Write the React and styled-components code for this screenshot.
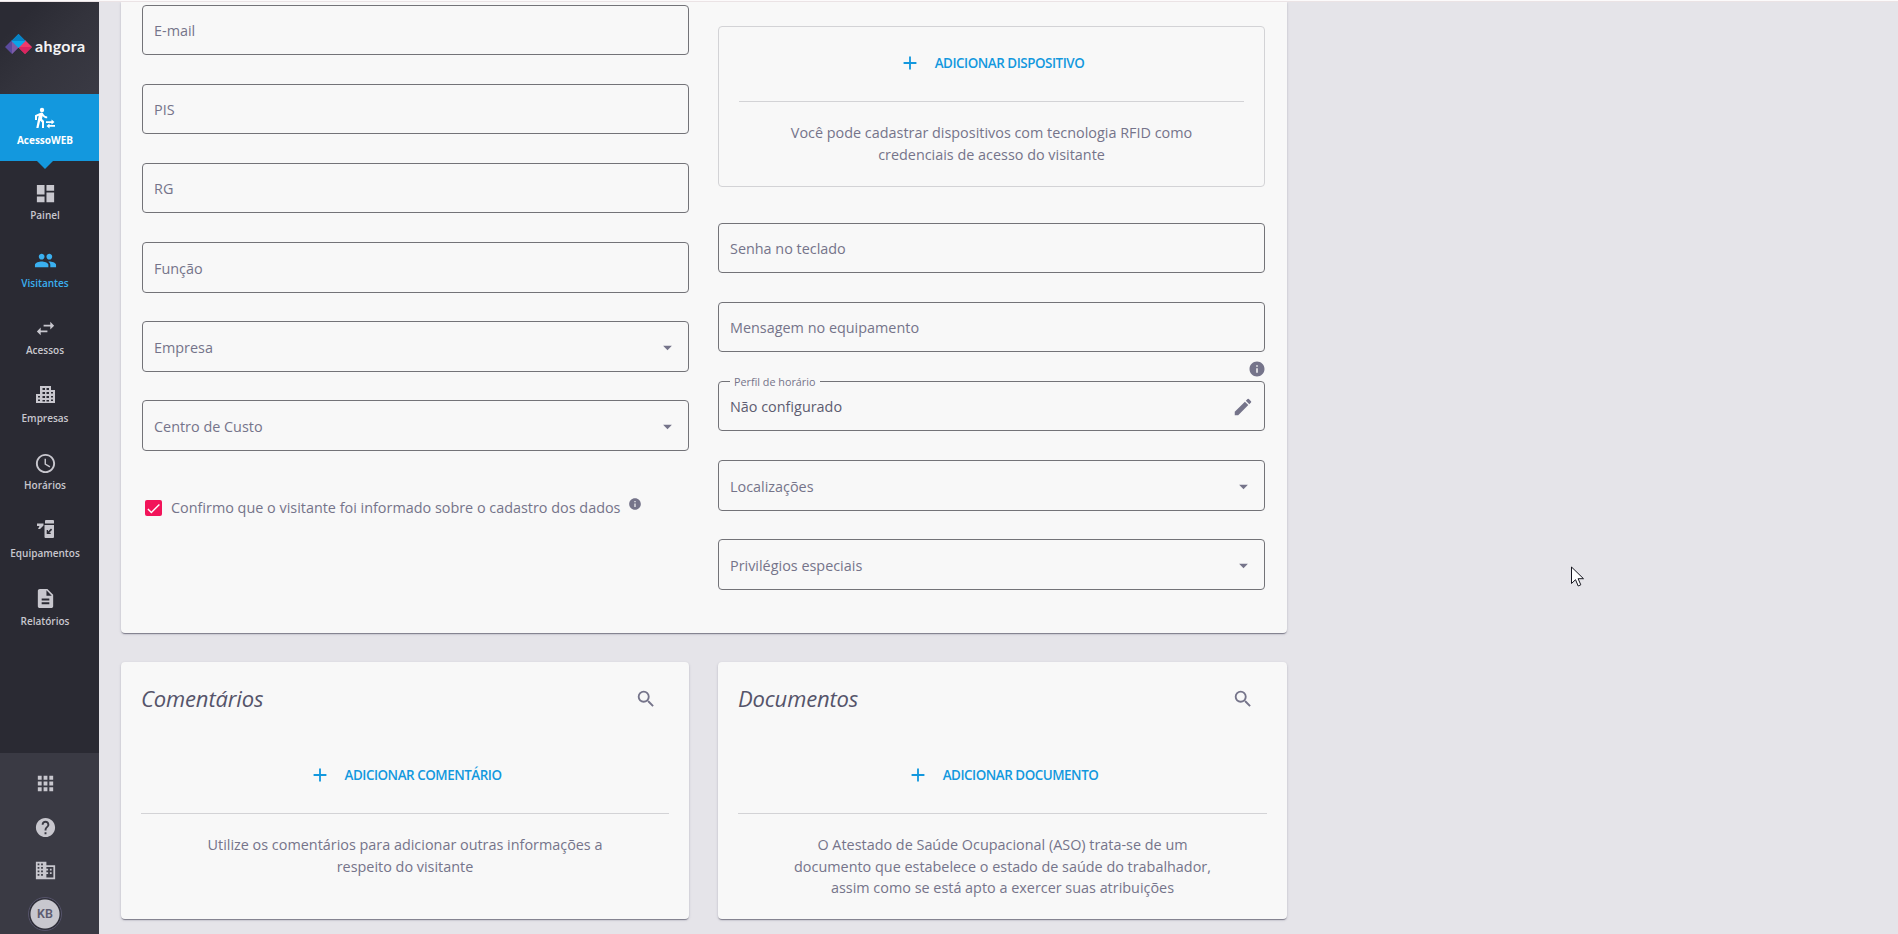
import * as React from 'react';
import styled, { createGlobalStyle, css } from 'styled-components';
import {
	MdDashboard,
	MdPeople,
	MdSwapHoriz,
	MdAccessTime,
	MdDescription,
	MdApps,
	MdHelp,
	MdSearch,
	MdAdd,
	MdEdit,
	MdInfo,
	MdArrowDropDown,
	MdCheck,
} from 'react-icons/md';

const GlobalStyle = createGlobalStyle`
	* {
		box-sizing: border-box;
	}

	body {
		margin: 0;
		height: 934px;
		overflow: hidden;
		background: #e5e4e9;
		font-family: 'Open Sans', 'Noto Sans', sans-serif;
		color: #75748a;
	}
`;

const TopStrip = styled.div`
	height: 2px;
	background: #fcfafb;
	border-bottom: 1px solid #ebe3e5;
`;

const Page = styled.div`
	display: flex;
	height: 932px;
	overflow: hidden;
`;

const Sidebar = styled.aside`
	display: flex;
	flex-direction: column;
	width: 99px;
	background: #2a2a33;
`;

const Brand = styled.div`
	display: flex;
	align-items: flex-start;
	height: 92px;
	padding: 32px 0 0 5px;
	background: linear-gradient(135deg, #2b2b34 20%, #33333c 52%, #3a3a44 100%);
`;

const BrandName = styled.span`
	margin-left: 2px;
	color: #f4f4f6;
	font: 700 16px/23px Lato, sans-serif;
	letter-spacing: 0.3px;
`;

const Nav = styled.nav`
	flex: 1;
	padding-right: 9px;
`;

const NavItem = styled.a`
	display: flex;
	flex-direction: column;
	align-items: center;
	height: 67.6px;
	padding-top: 17.5px;
	color: ${(props) => (props.$current ? '#3ab0f0' : '#c8c7ce')};
	font-size: 10px;
	font-weight: 600;
	line-height: 14px;

	svg {
		display: block;
		flex: none;
		margin-bottom: ${(props) => (props.$small ? '5.5px' : '3.5px')};
	}

	${(props) => props.$module && css`
		position: relative;
		height: 67px;
		margin-right: -9px;
		margin-bottom: 3px;
		padding: 13px 9px 0 0;
		background: #1398de;
		color: #fff;
		font-weight: 700;

		svg {
			margin-bottom: 4px;
		}

		&::after {
			content: '';
			position: absolute;
			top: 100%;
			left: 37px;
			border: 8.5px solid transparent;
			border-top-color: #1398de;
			border-bottom: 0;
		}
	`}
`;

const SidebarFooter = styled.div`
	height: 181px;
	padding: 9px 9px 0 0;
	background: #3a3a44;
	color: #c8c7ce;
`;

const FooterItem = styled.a`
	display: flex;
	align-items: center;
	justify-content: center;
	height: 43.4px;
`;

const Avatar = styled.div`
	display: flex;
	align-items: center;
	justify-content: center;
	width: 34px;
	height: 34px;
	border: 1px solid #55536a;
	border-radius: 50%;
	background: radial-gradient(circle, #c8c7ce 14px, #2f2f39 15px);
	color: #5d5c70;
	font: 600 12.5px Roboto, sans-serif;
`;

const Content = styled.main`
	width: 1166px;
	margin-left: 22px;
`;

const Card = styled.section`
	border-radius: 4px;
	background: #f8f8f8;
	box-shadow: 0 2px 1px -1px rgba(40, 38, 60, 0.35), 0 1px 1px rgba(40, 38, 60, 0.2), 0 1px 3px rgba(40, 38, 60, 0.16);
`;

const FormCard = styled(Card)`
	display: grid;
	grid-template-columns: 547px 547px;
	grid-gap: 29px;
	height: 631px;
	padding: 3px 0 0 21px;
	border-radius: 0 0 4px 4px;
`;

const FieldBox = styled.div`
	position: relative;
	display: flex;
	align-items: center;
	justify-content: space-between;
	height: ${(props) => (props.$tall ? '51px' : '50px')};
	margin-bottom: ${(props) => (props.$tall ? '28px' : '29px')};
	padding: 1px 10px 0 11px;
	border: 1px solid #737378;
	border-radius: 4px;
	color: ${(props) => (props.$filled ? '#5d5c70' : '#75748a')};
	font-size: 14.4px;

	svg {
		color: #75748a;
	}
`;

const FloatingLabel = styled.span`
	position: absolute;
	top: -8px;
	left: 11px;
	padding: 0 4px;
	background: #f8f8f8;
	color: #75748a;
	font-size: 10.8px;
	line-height: 15px;
`;

const FieldHint = styled.span`
	position: absolute;
	top: -22px;
	right: -2px;
	display: flex;
`;

const Consent = styled.label`
	display: flex;
	align-items: center;
	padding: 17px 0 0 3px;
	font-size: 14.4px;
	line-height: 24px;

	> svg {
		margin: -8px 0 0 8px;
	}
`;

const Checkbox = styled.span`
	display: flex;
	width: 17px;
	height: 16px;
	margin-right: 9px;
	border-radius: 2px;
	background: #f2145a;
	color: #fff;
`;

const DeviceBox = styled.div`
	height: 161px;
	margin: 21px 0 36px;
	padding: 18px 20px 0;
	border: 1px solid #d3d3d6;
	border-radius: 4px;
`;

const AddButton = styled.button`
	display: flex;
	align-items: center;
	justify-content: center;
	width: 100%;
	height: 36px;
	padding: 0 0 1px;
	border: 0;
	background: none;
	color: #1398de;
	font: 600 13.4px 'Open Sans', sans-serif;
	letter-spacing: -0.46px;

	svg {
		margin-right: 14px;
	}
`;

const Help = styled.p`
	margin: 20px 0 0;
	padding-top: 20px;
	border-top: 1px solid #d3d3d6;
	font-size: 14.4px;
	line-height: 21.6px;
	text-align: center;
`;

const Line = styled.span`
	display: block;
	white-space: nowrap;
`;

const Panels = styled.div`
	display: grid;
	grid-template-columns: 568px 569px;
	grid-gap: 29px;
	margin-top: 29px;
`;

const Panel = styled(Card)`
	height: 257px;
	padding: 19px 20px 0;
`;

const PanelHeader = styled.header`
	display: flex;
	align-items: center;
	justify-content: space-between;
	height: 36px;
	margin-bottom: 40px;
	padding-right: ${(props) => props.$inset}px;
`;

const PanelTitle = styled.h2`
	margin: 0;
	padding-bottom: 2px;
	color: #55546a;
	font: italic 400 22px 'Open Sans', sans-serif;
	letter-spacing: -0.15px;
`;

const Cursor = styled.svg`
	position: absolute;
	left: 1571px;
	top: 566px;
`;

const Logo = () => (
	<svg width="28" height="22" viewBox="0 0 28 22">
		<path d="M7 6l7 7-7 7-7-7z" fill="#5b4a9c" />
		<path d="M7 6l7 7-7 7z" fill="#7d5ba6" />
		<path d="M20 6l7 7-7 7-7-7z" fill="#ef3a6a" />
		<path d="M20 20l-7-7h14z" fill="#d92560" />
		<path d="M13.500 0l7 7-7 7-7-7z" fill="#0aa5e8" />
		<path d="M13.500 0l7 7h-14z" fill="#0782c4" />
	</svg>
);

const AccessIcon = () => (
	<svg width="22" height="22" viewBox="0 0 22 22" fill="currentColor">
		<circle cx="8" cy="3" r="2.200" />
		<path d="M6 6L1 8.200V13h2V9.500l1.700-.7L2.300 21h2.200l1.700-7.200L8 15.600V21h2v-7l-2-2 .6-3c1.200 1.500 2.700 2.300 4.600 2.300V9.400c-1.500 0-2.800-.8-3.500-2l-.9-1.300C8.200 5.300 7.500 5.400 6 6z" />
		<path d="M17.500 12.500v1.700H12v1.700h5.500v1.700l3-2.500zM15.500 16.500l-3 2.500 3 2.400v-1.600H21v-1.700h-5.500z" />
	</svg>
);

const CompanyIcon = () => (
	<svg width="21" height="21" viewBox="0 0 21 21" fill="currentColor">
		<path
			fillRule="evenodd"
			d="M5 2h11v4h4v13H1v-9h4zM7.500 4v2H10V4zm4 0v2H14V4zm-4 4v2H10V8zm4 0v2H14V8zm-4 4v2H10v-2zm4 0v2H14v-2zm-4 4v1.500H10V16zm4 0v1.500H14V16zM3 12v1.500h2V12zm0 3.500V17h2v-1.500zM16 8v1.500h2V8zm0 4v1.500h2V12zm0 3.500V17h2v-1.500z"
		/>
	</svg>
);

const DeviceIcon = () => (
	<svg width="21" height="21" viewBox="0 0 21 21" fill="currentColor">
		<path
			fillRule="evenodd"
			d="M10 2q0-1 1-1h7q1 0 1 1v2.500h-9zM9.500 6H19v12q0 1-1 1h-7.500q-1 0-1-1zM16 9.500l-3 3V11h-1.300v4h4v-1.300h-1.500l3-3z"
		/>
		<path d="M2 4.500h6.500v2L5 10H3l1.500-3H2z" />
	</svg>
);

const BuildingIcon = () => (
	<svg width="21" height="21" viewBox="0 0 24 24" fill="currentColor">
		<path fillRule="evenodd" d="M1 2h12v4h10v16H1zM3 4v2h2V4zm4 0v2h2V4zM3 8v2h2V8zm4 0v2h2V8zm-4 4v2h2v-2zm4 0v2h2v-2zm-4 4v2h2v-2zm4 0v2h2v-2zm6-8v2h2v2h-2v2h2v2h-2v4h8V8zm4 2h2v2h-2zm0 4h2v2h-2z" />
	</svg>
);

const navItems = [
	{ label: 'Painel', icon: <MdDashboard size={23} /> },
	{ label: 'Visitantes', icon: <MdPeople size={23} />, current: true },
	{ label: 'Acessos', icon: <MdSwapHoriz size={23} /> },
	{ label: 'Empresas', icon: <CompanyIcon />, small: true },
	{ label: 'Horários', icon: <MdAccessTime size={23} /> },
	{ label: 'Equipamentos', icon: <DeviceIcon />, small: true },
	{ label: 'Relatórios', icon: <MdDescription size={23} /> },
];

const Field = ({ label, value, select, tall, children }) => (
	<FieldBox $tall={tall || select} $filled={!!value}>
		{value && <FloatingLabel>{label}</FloatingLabel>}
		<span>{value || label}</span>
		{select && <MdArrowDropDown size={21} />}
		{children}
	</FieldBox>
);

const AddBlock = ({ action, lines }) => (
	<>
		<AddButton type="button"><MdAdd size={22} />{action}</AddButton>
		<Help>{lines.map((line) => <Line key={line}>{line}</Line>)}</Help>
	</>
);

const App = () => (
	<>
		<GlobalStyle />
		<TopStrip />
		<Page>
			<Sidebar>
				<Brand><Logo /><BrandName>ahgora</BrandName></Brand>
				<Nav>
					<NavItem $module><AccessIcon />AcessoWEB</NavItem>
					{navItems.map((item) => (
						<NavItem key={item.label} $current={item.current} $small={item.small}>{item.icon}{item.label}</NavItem>
					))}
				</Nav>
				<SidebarFooter>
					<FooterItem><MdApps size={23} /></FooterItem>
					<FooterItem><MdHelp size={23} /></FooterItem>
					<FooterItem><BuildingIcon /></FooterItem>
					<FooterItem><Avatar>KB</Avatar></FooterItem>
				</SidebarFooter>
			</Sidebar>
			<Content>
				<FormCard>
					<div>
						<Field label="E-mail" />
						<Field label="PIS" />
						<Field label="RG" />
						<Field label="Função" tall />
						<Field label="Empresa" select />
						<Field label="Centro de Custo" select />
						<Consent>
							<Checkbox><MdCheck size={17} /></Checkbox>
							Confirmo que o visitante foi informado sobre o cadastro dos dados
							<MdInfo size={14} />
						</Consent>
					</div>
					<div>
						<DeviceBox>
							<AddBlock
								action="ADICIONAR DISPOSITIVO"
								lines={['Você pode cadastrar dispositivos com tecnologia RFID como', 'credenciais de acesso do visitante']}
							/>
						</DeviceBox>
						<Field label="Senha no teclado" />
						<Field label="Mensagem no equipamento" />
						<Field label="Perfil de horário" value="Não configurado">
							<FieldHint><MdInfo size={18} /></FieldHint>
							<MdEdit size={22} />
						</Field>
						<Field label="Localizações" select />
						<Field label="Privilégios especiais" select />
					</div>
				</FormCard>
				<Panels>
					<Panel>
						<PanelHeader $inset={12}><PanelTitle>Comentários</PanelTitle><MdSearch size={22} /></PanelHeader>
						<AddBlock
							action="ADICIONAR COMENTÁRIO"
							lines={['Utilize os comentários para adicionar outras informações a', 'respeito do visitante']}
						/>
					</Panel>
					<Panel>
						<PanelHeader $inset={13}><PanelTitle>Documentos</PanelTitle><MdSearch size={22} /></PanelHeader>
						<AddBlock
							action="ADICIONAR DOCUMENTO"
							lines={['O Atestado de Saúde Ocupacional (ASO) trata-se de um', 'documento que estabelece o estado de saúde do trabalhador,', 'assim como se está apto a exercer suas atribuições']}
						/>
					</Panel>
				</Panels>
			</Content>
		</Page>
		<Cursor width="14" height="21" viewBox="0 0 14 21">
			<path d="M.5 1v16.500l4-3.800 2.700 6.300 2.600-1.200-2.700-6.100h5.400z" fill="#fff" stroke="#15151f" />
		</Cursor>
	</>
);

export default App;
